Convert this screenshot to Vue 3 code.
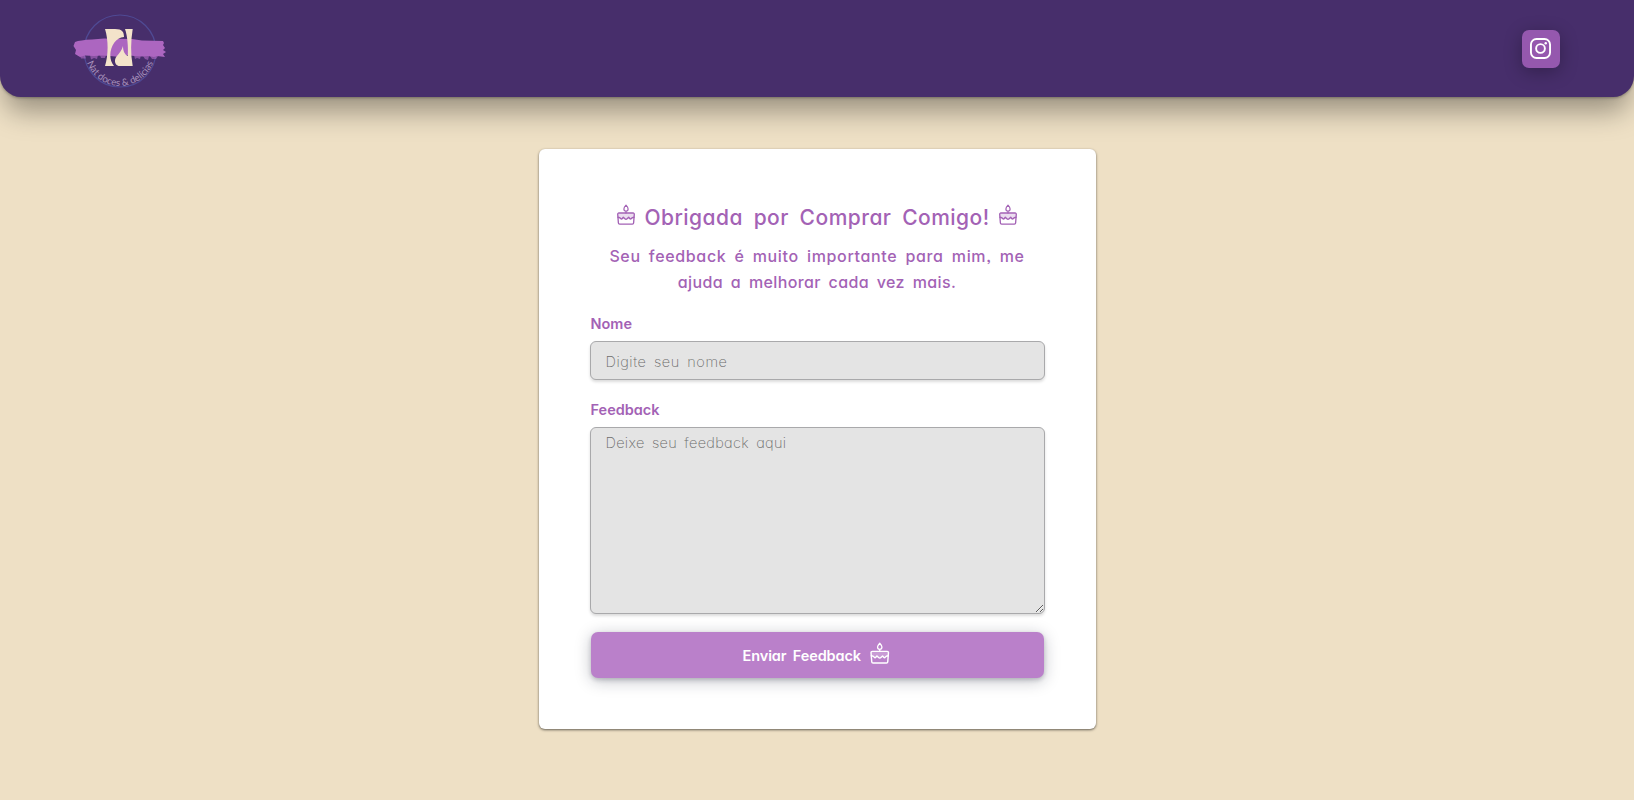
<script setup>
import { h } from 'vue'

// Birthday cake outline, shared by the heading and the submit button
const CakeIcon = () =>
  h('svg', { viewBox: '0 0 18 20', fill: 'none', stroke: 'currentColor', 'stroke-width': 1.35, 'stroke-linejoin': 'round', 'stroke-linecap': 'round' }, [
    h('path', { d: 'M1.8 8.200h14.400a1.100 1.100 0 0 1 1.100 1.200l-.3 4H1l-.3-4a1.100 1.100 0 0 1 1.100-1.200z', fill: 'currentColor', 'fill-opacity': 0.22, stroke: 'none' }),
    h('path', { d: 'M9 .2C7.700 1.600 6.900 2.700 6.900 3.900a2.100 2.100 0 0 0 4.200 0C11.100 2.700 10.300 1.600 9 .2zM9 6.200v1.800', 'stroke-width': 1.2 }),
    h('path', { d: 'M1.900 8h14.200a1.200 1.200 0 0 1 1.200 1.300l-.7 8.700a1.200 1.200 0 0 1-1.200 1.100H2.600a1.200 1.200 0 0 1-1.200-1.100L.7 9.300a1.200 1.200 0 0 1 1.200-1.300z' }),
    h('path', { d: 'M1 12.200c1.300 0 2 .3 2.700 1.300.5.700 1.100.7 1.600 0l1-1.200 1.600 1.500c.6.600 1.600.6 2.200 0l1.600-1.500 1 1.200c.5.700 1.100.7 1.600 0 .7-1 1.400-1.300 2.700-1.300' }),
  ])
</script>

<template>
  <div class="page">
    <header class="topbar">
      <svg class="logo" viewBox="0 0 96 76">
        <circle cx="48" cy="38" r="36" fill="none" stroke="#4f4a94" stroke-width="1.200" />
        <path fill="#ac66c0" d="M3 29 Q8 27 20 26.500 L32 25.500 L60 26 L70 27.500 L91 28 L92 30 L91 32 L93 35 L91 37 L94 39 L91 41 L93 44 L85 43 L82 44 L76 43 L70 43.500 L62 43 L55 42 L48 44 L38 43 L30 42.500 L22 43 L13 42.500 L8 44 L3 41 L4 37 L1.500 33 Z" />
        <path fill="#ac66c0" opacity="0.65" d="M8 43l5-1 1 3.500-5 0zM18 42h8l-1 4-3-1-3 1.500zM28 42h6l-1 3-4 0zM62 42h7l-1 4-3-1-2 1zM71 43h6l-1 4-3-1zM78 43h8l-2 3-4 0z" />
        <path fill="#f3e3ca" d="M33 16 H43 C50.500 16 52 19 52 24 C44 24.500 38.500 33 38.300 42 C38.300 46 39.500 50 42 53 H33 C36.500 42 36.500 27 33 16z" />
        <path fill="#f3e3ca" d="M53 16 H60.700 C58.700 28 58.500 41 60.700 53 H46.500 C42.500 51.500 42 47 44.500 43.500 C47 40.500 50 37 51 33 C51 37.500 52.500 41.500 55.800 43 C56.300 34 55.500 23 53 16z" />
        <path id="logo-arc" fill="none" d="M13 38 A35 35 0 0 0 83 38" />
        <text class="logo-text"><textPath href="#logo-arc" startOffset="50%">Nat doces &amp; delícias</textPath></text>
      </svg>
      <a class="social" aria-label="Instagram">
        <svg viewBox="0 0 22 22" fill="none" stroke="#fff" stroke-width="2">
          <rect x="1" y="1" width="20" height="20" rx="5.800" />
          <circle cx="11" cy="11" r="4.600" />
          <circle cx="16.500" cy="5.500" r="1.300" fill="#fff" stroke="none" />
        </svg>
      </a>
    </header>

    <main class="card">
      <h1><CakeIcon class="cake" /><span>Obrigada por Comprar Comigo!</span><CakeIcon class="cake" /></h1>
      <p class="lead"><span class="l1">Seu feedback é muito importante para mim, me</span><br /><span class="l2">ajuda a melhorar cada vez mais.</span></p>
      <form>
        <label for="name">Nome</label>
        <input id="name" type="text" placeholder="Digite seu nome" />
        <label for="feedback">Feedback</label>
        <textarea id="feedback" placeholder="Deixe seu feedback aqui"></textarea>
        <button type="button"><span>Enviar Feedback</span><CakeIcon class="cake" /></button>
      </form>
    </main>
  </div>
</template>

<style>
body {
  margin: 0;
  background: #eee0c5;
}
</style>

<style scoped>
.page {
  height: 800px;
  overflow: hidden;
  background: #eee0c5;
  font-family: Inter, "Liberation Sans", sans-serif;
  font-feature-settings: "cv11", "ss03";
}
.topbar {
  box-sizing: border-box;
  height: 97px;
  padding: 0 74px 0 72px;
  display: flex;
  align-items: center;
  justify-content: space-between;
  background: #472e6b;
  border-radius: 0 0 21px 21px;
  box-shadow: 0 1px 3px rgba(0, 0, 0, 0.3), 0 19px 28px -5px rgba(0, 0, 0, 0.36);
}
.logo {
  width: 96px;
  height: 76px;
  margin-top: 5px;
}
.logo-text {
  fill: #a691bb;
  font: 400 9.700px Lato, sans-serif;
  text-anchor: middle;
}
.social {
  width: 38px;
  height: 38px;
  display: grid;
  place-items: center;
  border-radius: 7px;
  background: #9558ae;
  box-shadow: 0 4px 18px rgba(0, 0, 0, 0.28);
}
.social svg {
  width: 21px;
  height: 21px;
  margin-right: 1px;
}
.card {
  box-sizing: border-box;
  width: 557px;
  height: 580px;
  margin: 51.500px auto 0;
  padding: 51px;
  background: #fff;
  border-radius: 6px;
  box-shadow: 0 1px 3px rgba(0, 0, 0, 0.4), 0 1px 2px rgba(0, 0, 0, 0.24);
  color: #a362b5;
}
h1 {
  margin: 0;
  height: 36px;
  display: flex;
  justify-content: center;
  align-items: center;
  gap: 9px;
  white-space: nowrap;
  font-size: 21px;
  font-weight: 500;
  letter-spacing: 0.470px;
  word-spacing: 4.700px;
}
.cake {
  width: 18px;
  height: 20px;
  flex: none;
  overflow: visible;
}
h1 .cake {
  margin-bottom: 6px;
}
.lead {
  margin: 7px 0 0;
  text-align: center;
  white-space: nowrap;
  font-size: 16px;
  line-height: 26.200px;
  font-weight: 500;
}
.l1 {
  letter-spacing: 0.660px;
  word-spacing: 3.200px;
}
.l2 {
  letter-spacing: 0.350px;
  word-spacing: 3.300px;
}
form {
  display: flex;
  flex-direction: column;
}
label {
  box-sizing: border-box;
  margin: 19.500px 0 0 1px;
  height: 27px;
  line-height: 20px;
  font-size: 14.500px;
  font-weight: 600;
}
input,
textarea,
button {
  box-sizing: border-box;
  font-family: inherit;
  font-feature-settings: inherit;
}
input,
textarea {
  width: 455px;
  margin: 0;
  padding: 2px 15px 0;
  border: 1px solid #a9a9ab;
  border-radius: 6px;
  background: #e4e4e4;
  box-shadow: 0 2px 3px rgba(0, 0, 0, 0.14);
  font-size: 14.500px;
  font-weight: 200;
  letter-spacing: 0.550px;
  word-spacing: 2.900px;
}
input {
  height: 39px;
}
textarea {
  height: 187.500px;
  padding-top: 5.500px;
  line-height: 20px;
  letter-spacing: 0.320px;
}
input::placeholder,
textarea::placeholder {
  color: #6c6c6c;
}
button {
  width: 453px;
  height: 46px;
  margin: 17.500px auto 0;
  padding: 0;
  display: flex;
  align-items: center;
  justify-content: center;
  gap: 9px;
  border: 0;
  border-radius: 7px;
  background: #ba80ca;
  color: #fff;
  box-shadow: 0 3px 16px rgba(20, 25, 45, 0.26), 0 2px 4px rgba(20, 25, 45, 0.2);
  font-size: 14.500px;
  font-weight: 600;
  letter-spacing: -0.130px;
  word-spacing: 3px;
}
button span {
  margin-top: 2px;
}
button .cake {
  width: 19.500px;
  height: 21px;
  margin: 0 2px 2px 0;
}
</style>
